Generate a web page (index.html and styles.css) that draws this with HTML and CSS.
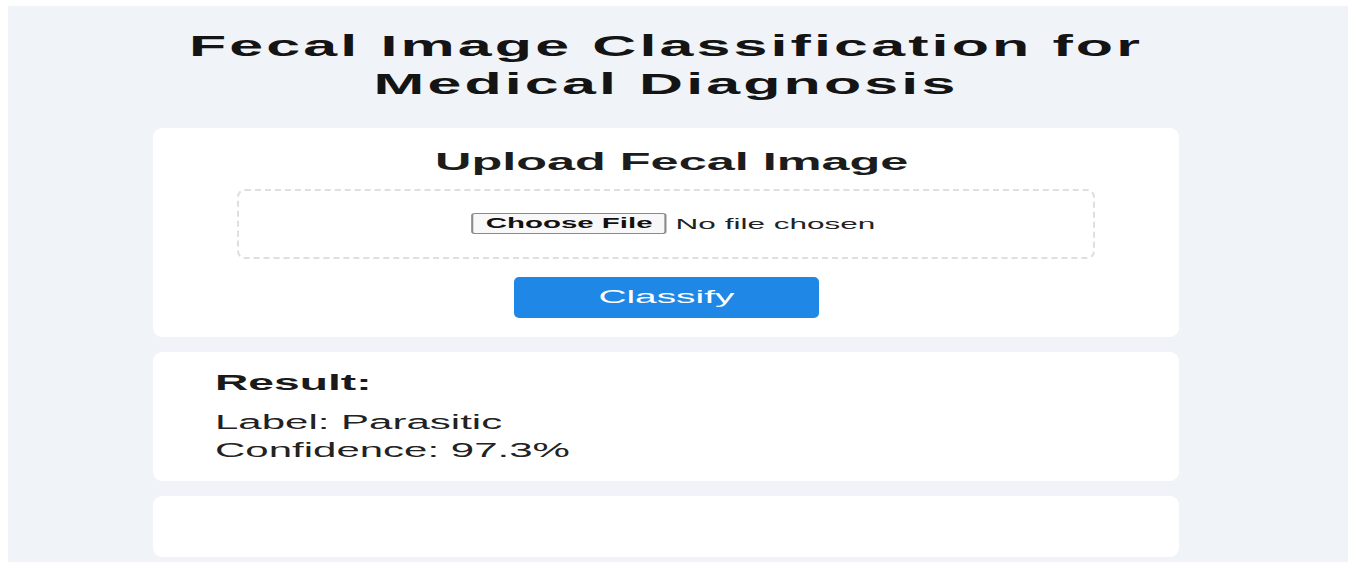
FILE: index.html
```html
<!DOCTYPE html>
<html lang="en">
<head>
<meta charset="utf-8">
<title>Fecal Image Classification for Medical Diagnosis</title>
<link rel="stylesheet" href="styles.css">
</head>
<body>
<div class="page">
  <main class="container">
    <h1 class="title"><span class="wide">Fecal Image Classification for Medical Diagnosis</span></h1>

    <section class="card upload-card">
      <h2 class="card-heading"><span class="wide">Upload Fecal Image</span></h2>
      <div class="drop-zone">
        <label class="file-row wide" for="fecal-file">
          <span class="file-btn">Choose File</span>
          <span class="file-name">No file chosen</span>
        </label>
        <input type="file" id="fecal-file" accept="image/*" hidden>
      </div>
      <button class="classify-btn" type="button"><span class="wide">Classify</span></button>
    </section>

    <section class="card result-card">
      <h3 class="result-title wide-left">Result:</h3>
      <p class="result-line wide-left">Label: Parasitic</p>
      <p class="result-line wide-left">Confidence: 97.3%</p>
    </section>

    <section class="card empty-card"></section>
  </main>
</div>
</body>
</html>
```

FILE: styles.css
```css
html, body {
  margin: 0;
}

body {
  padding: 6px 0 0 8px;
  background: #ffffff;
  font-family: "Liberation Sans", Arial, Helvetica, sans-serif;
  color: #1f1f1f;
  overflow: hidden;
}

.page {
  background: #f0f3f8;
  padding: 21px 24px 5px 0;
}

.container {
  max-width: 1026px;
  margin: 0 auto;
}

/* broad type: the app renders its text widened */
.wide {
  display: inline-block;
  transform: scaleX(2.1);
  transform-origin: center;
}

.wide-left {
  width: fit-content;
  transform: scaleX(2.1);
  transform-origin: left center;
}

.title {
  margin: 0 0 25px;
  text-align: center;
  font-size: 29px;
  line-height: 38px;
  font-weight: 700;
  color: #141414;
}

.title .wide {
  max-width: 470px;
  letter-spacing: 1.5px;
}

.card {
  background: #ffffff;
  border-radius: 9px;
}

.card + .card {
  margin-top: 15px;
}

.upload-card {
  padding: 20px 20px 19px;
  text-align: center;
}

.card-heading {
  margin: 0;
  font-size: 24px;
  line-height: 1.2;
  font-weight: 700;
  color: #1c1c1c;
}

.card-heading .wide {
  margin-left: 12px;
}

.drop-zone {
  margin: 12px 64px 0;
  height: 70px;
  box-sizing: border-box;
  border: 2px dashed #dcdfe4;
  border-radius: 8px;
  display: flex;
  align-items: center;
  justify-content: center;
}

.file-row {
  display: flex;
  align-items: center;
  gap: 4px;
  margin-left: 14px;
  cursor: pointer;
}

.file-btn {
  height: 21px;
  box-sizing: border-box;
  padding: 0 6px;
  border: 1px solid #8a8a8a;
  border-radius: 2px;
  background: #f8f8f8;
  font-size: 14px;
  font-weight: 700;
  line-height: 19px;
  color: #111;
}

.file-name {
  font-size: 15px;
  color: #222;
}

.classify-btn {
  display: block;
  margin: 18px auto 0;
  width: 305px;
  height: 41px;
  border: none;
  border-radius: 5px;
  background: #1f87e6;
  color: #ffffff;
  font-family: inherit;
  font-size: 18.5px;
  cursor: pointer;
}

.result-card {
  padding: 18px 62px 17px;
}

.result-title {
  margin: 0 0 12px;
  font-size: 22px;
  line-height: 1.2;
  font-weight: 700;
  color: #1a1a1a;
}

.result-line {
  margin: 0;
  font-size: 20px;
  line-height: 28px;
  color: #222;
}

.empty-card {
  height: 61px;
}
```
